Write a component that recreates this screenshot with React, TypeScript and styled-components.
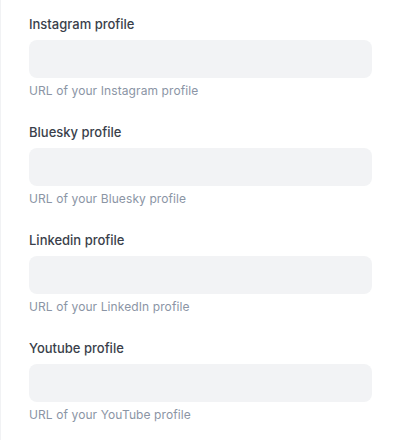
import styled, { createGlobalStyle } from 'styled-components';

const GlobalStyle = createGlobalStyle`
  html, body {
    margin: 0;
    padding: 0;
    background: #ffffff;
  }
  body {
    font-family: Inter, "Noto Sans", sans-serif;
    -webkit-font-smoothing: antialiased;
  }
`;

const Panel = styled.div`
  width: 400px;
  height: 440px;
  box-sizing: border-box;
  border-left: 1px solid #f1f2f4;
  padding: 14px 28px 0 28px;
  display: flex;
  flex-direction: column;
  gap: 23px;
  overflow: hidden;
`;

const Field = styled.div`
  display: flex;
  flex-direction: column;
`;

const Label = styled.label`
  font-size: 13px;
  line-height: 20px;
  font-weight: 500;
  color: #3a3f4b;
  margin-bottom: 6px;
`;

const Input = styled.input`
  box-sizing: border-box;
  width: 100%;
  height: 38px;
  border: none;
  border-radius: 8px;
  background: #f2f3f5;
  padding: 0 12px;
  font-family: inherit;
  font-size: 14px;
  color: #111827;
  outline: none;
`;

const Hint = styled.p`
  margin: 5px 0 0;
  font-size: 12px;
  line-height: 16px;
  letter-spacing: 0.1px;
  color: #8b95a5;
`;

const fields = [
  { id: 'instagram', label: 'Instagram profile', hint: 'URL of your Instagram profile' },
  { id: 'bluesky', label: 'Bluesky profile', hint: 'URL of your Bluesky profile' },
  { id: 'linkedin', label: 'Linkedin profile', hint: 'URL of your LinkedIn profile' },
  { id: 'youtube', label: 'Youtube profile', hint: 'URL of your YouTube profile' },
];

export default function App() {
  return (
    <>
      <GlobalStyle />
      <Panel>
        {fields.map((f) => (
          <Field key={f.id}>
            <Label htmlFor={f.id}>{f.label}</Label>
            <Input id={f.id} type="url" />
            <Hint>{f.hint}</Hint>
          </Field>
        ))}
      </Panel>
    </>
  );
}
